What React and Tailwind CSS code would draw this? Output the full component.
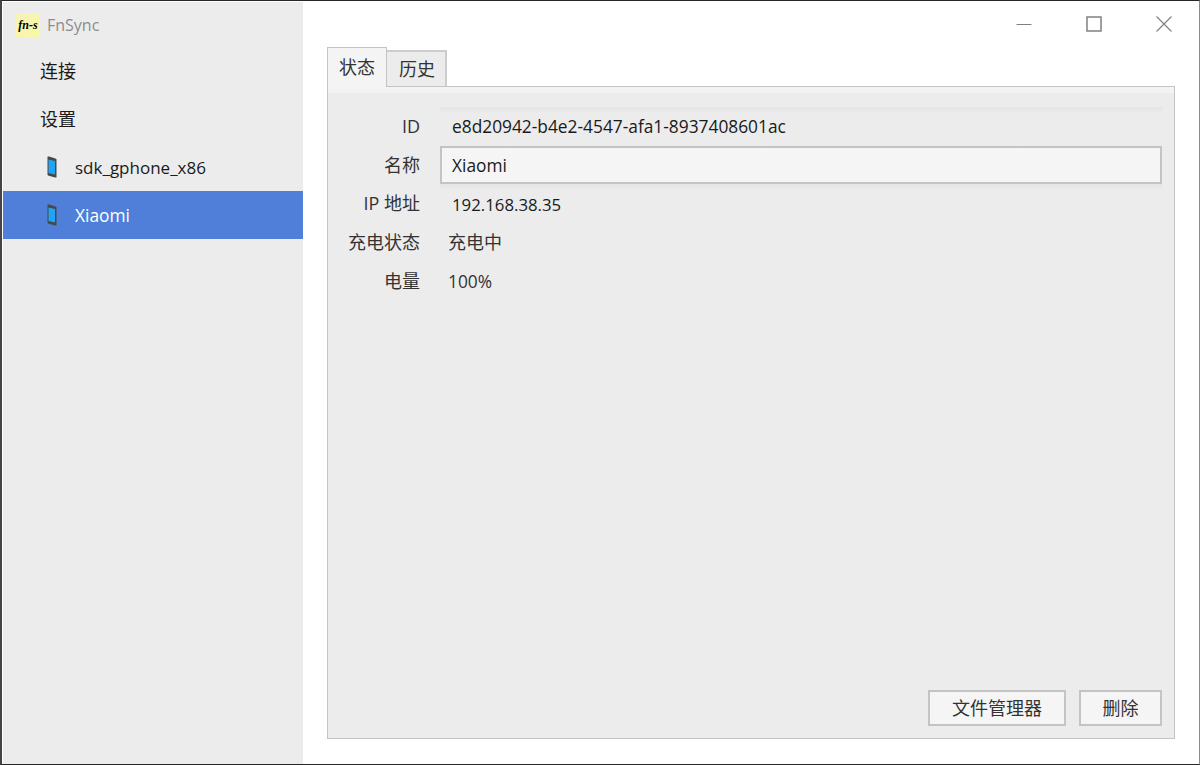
const font = "font-['Open_Sans','Noto_Sans_CJK_SC',sans-serif]";

const PhoneIcon = () => (
  <svg width="10" height="22" viewBox="0 0 10 22" className="shrink-0">
    <path d="M0.5 0.5 L2 0.5 L8.5 2.5 L9.5 3.5 L9.5 21.5 L8 21.5 L1 19.5 L0.5 18.5 Z" fill="#484848" />
    <path d="M1.5 3.5 L8 5 L8 18.5 L1.5 17 Z" fill="#22a3f5" />
  </svg>
);

const SideItem = ({ children, active }) => (
  <div
    className={
      active
        ? "h-12 flex items-center gap-[18px] pl-[44px] bg-[#4f7fd9] text-white"
        : "h-12 flex items-center gap-[18px] pl-[44px] text-[#1a1a1a]"
    }
  >
    {children}
  </div>
);

const Row = ({ label, children }) => (
  <div className="h-[38.7px] flex items-center">
    <div className="w-[92px] text-right text-[18px] text-[#333333] whitespace-nowrap">{label}</div>
    <div className="flex-1 ml-[20px] min-w-0 h-full">{children}</div>
  </div>
);

const ReadOnlyField = ({ children, className }) => (
  <div className={`h-full flex items-center pl-[12px] bg-gradient-to-b from-[#e4e4e4] to-[#ececec] to-[6px] text-[#1a1a1a] ${className}`}>
    {children}
  </div>
);

const App = () => {
  return (
    <div
      className={`w-[1200px] h-[765px] flex overflow-hidden bg-white border-t border-b border-t-[#262626] border-b-[#262626] border-l-2 border-l-[#444444] border-r border-r-[#8c8c8c] text-[17.33px] ${font}`}
    >
      {/* Sidebar */}
      <div className="w-[300px] ml-px mt-px bg-[#ececec] flex flex-col shrink-0">
        <div className="h-[45px] flex items-center pl-[13px] gap-[7px]">
          <div className="w-[24px] h-[24px] bg-gradient-to-br from-[#f5f3b8] to-[#faf8a4] flex items-center justify-center">
            <span className="font-['Liberation_Serif',serif] italic font-bold text-[12px] text-black">fn-s</span>
          </div>
          <span className="text-[16px] text-[#8c8c8c]">FnSync</span>
        </div>
        <div className="h-12 flex items-center pl-[37px] text-[18px] text-[#1a1a1a]">连接</div>
        <div className="h-12 flex items-center pl-[37px] text-[18px] text-[#1a1a1a]">设置</div>
        <SideItem>
          <PhoneIcon />
          <span className="text-[17px] pt-px">sdk_gphone_x86</span>
        </SideItem>
        <SideItem active>
          <PhoneIcon />
          <span className="pt-px">Xiaomi</span>
        </SideItem>
      </div>

      {/* Main */}
      <div className="flex-1 min-w-0 flex flex-col">
        <div className="h-[46px] flex justify-end items-center shrink-0">
          <svg width="16" height="16" viewBox="0 0 16 16" className="mr-[54px]">
            <path d="M0.5 8.5 H15.5" stroke="#808080" strokeWidth="1" />
          </svg>
          <svg width="16" height="16" viewBox="0 0 16 16" className="mr-[54px]">
            <rect x="1" y="1" width="14" height="14" fill="none" stroke="#808080" strokeWidth="1.5" />
          </svg>
          <svg width="16" height="16" viewBox="0 0 16 16" className="mr-[27px]">
            <path d="M0.5 0.5 L15.5 15.5 M15.5 0.5 L0.5 15.5" stroke="#808080" strokeWidth="1.2" />
          </svg>
        </div>

        <div className="flex-1 flex flex-col pl-[24px] pr-[24px] pb-[25px] min-h-0">
          {/* Tabs */}
          <div className="flex h-[39px] items-end shrink-0 relative z-10 text-[18px]">
            <div className="w-[60px] h-[40px] -mb-px flex items-center justify-center bg-[#f4f4f4] border border-b-0 border-[#c4c4c4] text-[#333333]">
              状态
            </div>
            <div className="w-[60px] h-[36px] flex items-center justify-center pl-[2px] bg-[#ececec] border-t-2 border-r-2 border-[#cccccc] text-[#333333]">
              历史
            </div>
          </div>

          {/* Panel */}
          <div className="flex-1 flex flex-col bg-[#ececec] border border-[#c4c4c4] min-h-0">
            <div className="h-[6px] bg-[#f3f3f3] shrink-0" />
            <div className="flex-1 flex flex-col pt-[14px] pr-[12px] min-h-0">
              <Row label="ID">
                <ReadOnlyField className="pt-px">e8d20942-b4e2-4547-afa1-8937408601ac</ReadOnlyField>
              </Row>
              <Row label="名称">
                <div className="h-full flex items-center pl-[10px] pt-px bg-[#f5f5f5] border-2 border-[#c4c4c4] text-[#1a1a1a]">
                  Xiaomi
                </div>
              </Row>
              <Row label="IP 地址">
                <ReadOnlyField className="pt-[2px] text-[16.8px]">192.168.38.35</ReadOnlyField>
              </Row>
              <Row label="充电状态">
                <div className="h-full flex items-center pl-[8px] text-[18px] text-[#333333]">充电中</div>
              </Row>
              <Row label="电量">
                <div className="h-full flex items-center pl-[8px] pt-px text-[#333333]">100%</div>
              </Row>
              <div className="mt-auto mb-[12px] flex justify-end gap-[13px] text-[18px]">
                <button className="w-[138px] h-[36px] bg-[#f5f5f5] border-2 border-[#c4c4c4] text-[#333333]">
                  文件管理器
                </button>
                <button className="w-[83px] h-[36px] bg-[#f5f5f5] border-2 border-[#c4c4c4] text-[#333333]">
                  删除
                </button>
              </div>
            </div>
          </div>
        </div>
      </div>
    </div>
  );
};

export default App;
